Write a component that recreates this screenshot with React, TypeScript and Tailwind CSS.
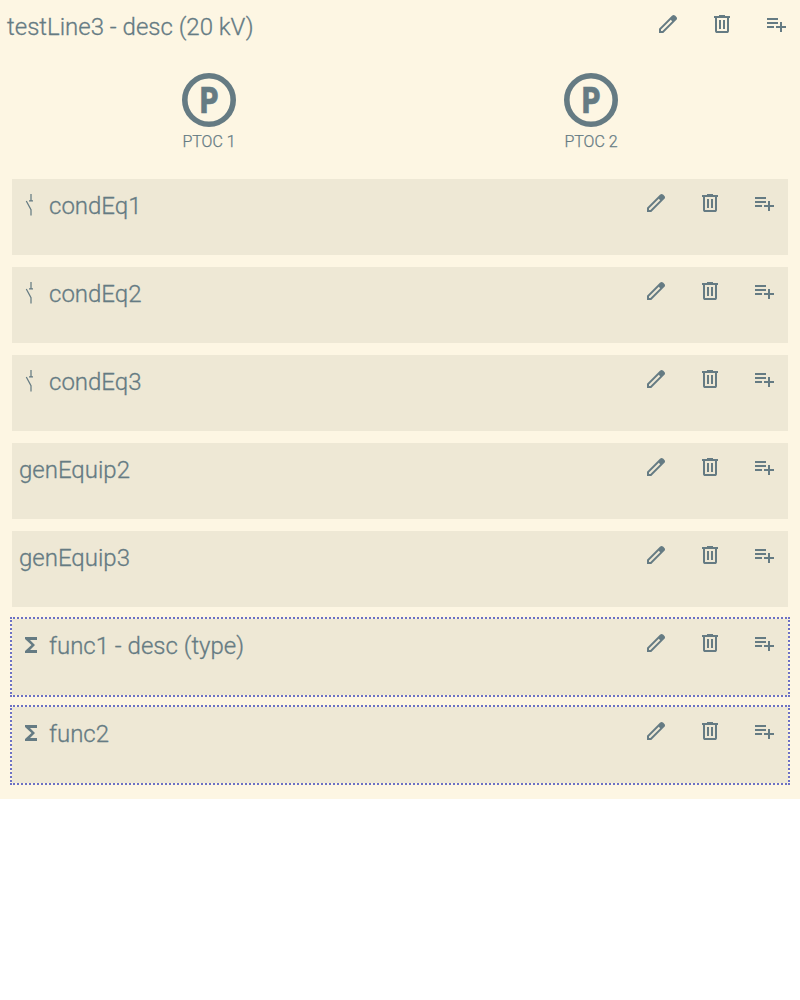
import React from "react";

const EDIT =
  "M200-200h57l391-391-57-57-391 391v57Zm-80 80v-170l528-527q12-11 26.5-17t30.5-6q16 0 31 6t26 18l55 56q12 11 17.5 26t5.5 30q0 16-5.5 30.5T817-647L290-120H120Zm640-584-56-56 56 56Zm-141 85-28-29 57 57-29-28Z";
const DELETE =
  "M280-120q-33 0-56.5-23.5T200-200v-520h-40v-80h200v-40h240v40h200v80h-40v520q0 33-23.5 56.5T680-120H280Zm400-600H280v520h400v-520ZM360-280h80v-360h-80v360Zm160 0h80v-360h-80v360Z";
const ADD =
  "M120-320v-80h280v80H120Zm0-160v-80h440v80H120Zm0-160v-80h440v80H120Zm520 480v-160H480v-80h160v-160h80v160h160v80H720v160h-80Z";

function Actions() {
  return (
    <nav className="flex shrink-0 gap-1.5">
      {[EDIT, DELETE, ADD].map((d) => (
        <button key={d} className="flex size-12 items-center justify-center">
          <svg viewBox="0 -960 960 960" className="size-6 fill-current">
            <path d={d} />
          </svg>
        </button>
      ))}
    </nav>
  );
}

function SwitchIcon() {
  return (
    <svg viewBox="0 0 24 24" className="size-6 fill-none stroke-current" strokeWidth="1.25">
      <path d="M12 0V6.8M10 6.8h4M7.3 7L12 15.6V21.6" />
    </svg>
  );
}

function FunctionIcon() {
  return (
    <svg viewBox="0 1 24 24" className="size-6 fill-current">
      <path d="M18 4H6v2l6.5 6L6 18v2h12v-3h-7l5-5-5-5h7z" />
    </svg>
  );
}

function LNode({ label }: { label: string }) {
  return (
    <figure className="flex flex-col items-center">
      <svg viewBox="0 0 64 64" className="size-16">
        <circle cx="32" cy="32" r="24.2" className="fill-none stroke-current" strokeWidth="5.6" />
        <text
          x="23"
          y="44.7"
          textLength="18.5"
          lengthAdjust="spacingAndGlyphs"
          strokeWidth="0.7"
          className="fill-current stroke-current font-['Roboto'] text-[36px] font-black"
        >
          P
        </text>
      </svg>
      <figcaption className="text-base leading-5 font-light [-webkit-text-stroke:0.25px]">{label}</figcaption>
    </figure>
  );
}

type Item = { name: string; kind: "switch" | "general" | "function" };

const ITEMS: Item[] = [
  { name: "condEq1", kind: "switch" },
  { name: "condEq2", kind: "switch" },
  { name: "condEq3", kind: "switch" },
  { name: "genEquip2", kind: "general" },
  { name: "genEquip3", kind: "general" },
  { name: "func1 - desc (type)", kind: "function" },
  { name: "func2", kind: "function" },
];

function Panel({ name, kind }: Item) {
  return (
    <section
      className={
        kind === "function"
          ? "flex h-[76px] justify-between bg-[#eee8d5] pl-[7px] outline-2 outline-[#6c71c4] outline-dotted"
          : "flex h-[76px] justify-between bg-[#eee8d5] pl-[7px]"
      }
    >
      <h2 className="flex h-[54px] items-center gap-1.5 text-2xl font-light [-webkit-text-stroke:0.3px]">
        {kind === "switch" && <SwitchIcon />}
        {kind === "function" && <FunctionIcon />}
        <span>{name}</span>
      </h2>
      <Actions />
    </section>
  );
}

export default function App() {
  return (
    <main className="flex h-[799px] flex-col bg-[#fdf6e3] font-['Roboto',sans-serif] text-[#657b83]">
      <header className="flex h-12 justify-between pl-[7px]">
        <h1 className="flex h-[54px] items-center text-2xl font-light [-webkit-text-stroke:0.3px]">
          testLine3 - desc (20 kV)
        </h1>
        <Actions />
      </header>
      <div className="mt-5 grid h-[111px] grid-cols-2 gap-3 px-6">
        <LNode label="PTOC 1" />
        <LNode label="PTOC 2" />
      </div>
      <div className="flex flex-col gap-3 px-3">
        {ITEMS.map((item) => (
          <Panel key={item.name} {...item} />
        ))}
      </div>
    </main>
  );
}
